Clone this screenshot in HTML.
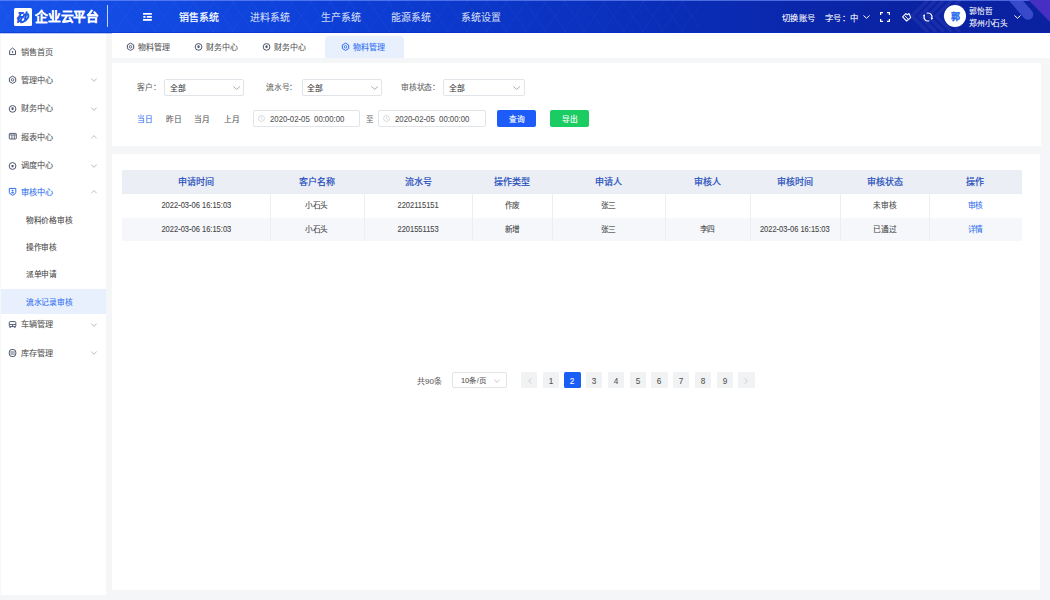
<!DOCTYPE html>
<html lang="zh-CN"><head><meta charset="utf-8"><style>
*{margin:0;padding:0;box-sizing:border-box}
html,body{width:1050px;height:600px;overflow:hidden;background:#f5f6f8;font-family:"Liberation Sans",sans-serif;color:#333}
.t{position:absolute;white-space:nowrap;line-height:1;transform-origin:0 0;-webkit-text-stroke:0.2px currentColor}
.b{position:absolute}
svg{position:absolute;overflow:visible}
#hdr{position:absolute;left:0;top:0;width:1050px;height:33px;background:linear-gradient(90deg,#1753ea 0%,#0d40d8 30%,#0a2fbb 60%,#0a23a3 85%,#0a21a0 100%);overflow:hidden}
</style></head><body>
<div id="hdr">
<div class="b" style="left:0;top:0;width:700px;height:32px;opacity:.025;background:repeating-linear-gradient(55deg,transparent 0 15px,#fff 15px 16px),repeating-linear-gradient(-55deg,transparent 0 15px,#fff 15px 16px)"></div>
<div class="b" style="left:0;top:0;width:1050px;height:1px;background:rgba(120,150,255,.6)"></div>
<svg style="left:990px;top:0" width="60" height="32" viewBox="0 0 60 32"><line x1="22" y1="-4" x2="38" y2="14.5" stroke="rgba(86,98,230,.62)" stroke-width="10.5" stroke-linecap="round"/><polygon points="38.5,0 60,0 60,22" fill="#4630c4"/></svg>
<svg style="left:900px;top:0" width="80" height="32" viewBox="0 0 80 32" opacity=".09"><path d="M28 0L12 16L28 32M36 0L20 16L36 32M44 0L28 16L44 32M52 0L36 16L52 32M60 0L44 16L60 32" fill="none" stroke="#b0a0ff" stroke-width="3.5"/></svg>
<div class="b" style="left:0;top:32px;width:1050px;height:1px;background:rgba(10,40,200,.45)"></div>
<div class="b" style="left:14px;top:8px;width:18px;height:17.8px;background:#fff;border-radius:1.5px"></div>
<div class="t" style="left:16.4px;top:11.7px;font-size:20px;transform:scale(0.6000,0.6000);color:#1a55e6;font-weight:bold;font-style:italic;-webkit-text-stroke:0.5px #1a55e6">砂</div>
<div class="t" style="left:35px;top:10.25px;font-size:20px;transform:scale(0.6400,0.6400);color:#fff;font-weight:bold">企业云平台</div>
<div class="b" style="left:107px;top:5px;width:1px;height:22.4px;background:rgba(255,255,255,.75)"></div>
<svg style="left:143.2px;top:13.1px" width="9" height="8" viewBox="0 0 9 8"><g fill="#fff"><rect x="0" y="0" width="8.8" height="1.7"/><rect x="0.3" y="3" width="2.2" height="1.8"/><rect x="3.8" y="3" width="5" height="1.8"/><rect x="0" y="6" width="8.8" height="1.8"/></g></svg>
<div class="t" style="left:179px;top:12.7px;font-size:20px;transform:scale(0.4950,0.4950);color:#fff;-webkit-text-stroke:0.45px #fff">销售系统</div>
<div class="t" style="left:249.6px;top:12.7px;font-size:20px;transform:scale(0.4950,0.4950);color:rgba(255,255,255,.78);">进料系统</div>
<div class="t" style="left:320.5px;top:12.7px;font-size:20px;transform:scale(0.4950,0.4950);color:rgba(255,255,255,.78);">生产系统</div>
<div class="t" style="left:391px;top:12.7px;font-size:20px;transform:scale(0.4950,0.4950);color:rgba(255,255,255,.78);">能源系统</div>
<div class="t" style="left:461px;top:12.7px;font-size:20px;transform:scale(0.4950,0.4950);color:rgba(255,255,255,.78);">系统设置</div>
<div class="t" style="left:782px;top:13.7px;font-size:20px;transform:scale(0.4150,0.4150);color:#fff;">切换账号</div>
<div class="t" style="left:825px;top:13.7px;font-size:20px;transform:scale(0.4150,0.4150);color:#fff;">字号：中</div>
<svg style="left:863px;top:15.3px" width="7" height="4" viewBox="0 0 7 4"><path d="M0.5 0.5L3.5 3.3L6.5 0.5" fill="none" stroke="#fff" stroke-width="1"/></svg>
<svg style="left:880px;top:12px" width="10" height="10" viewBox="0 0 10 10"><path d="M0.6 3V0.6H3M7 0.6H9.4V3M9.4 7V9.4H7M3 9.4H0.6V7" fill="none" stroke="#fff" stroke-width="1.2"/></svg>
<svg style="left:898px;top:9px" width="18" height="16" viewBox="0 0 18 16"><path d="M4.6 7.8L7.8 4.6L9.3 5.8L11.0 4.5L12.7 8.6L8.6 12.0Z" fill="none" stroke="#fff" stroke-width="1.1" stroke-linejoin="round"/><path d="M7.0 6.9L10.4 10.2" stroke="#fff" stroke-width="1"/></svg>
<svg style="left:923px;top:12px" width="10" height="10" viewBox="0 0 10 10"><path d="M3.63 1.24A4 4 0 0 1 8.46 7.0M6.37 8.76A4 4 0 0 1 1.54 3.0" fill="none" stroke="#fff" stroke-width="1.1"/><path d="M8.06 7.69L10.19 6.61L7.93 5.31ZM1.94 2.31L2.07 4.69L-0.19 3.39Z" fill="#fff"/></svg>
<div class="b" style="left:944px;top:5px;width:22px;height:22px;border-radius:50%;background:#fff"></div>
<div class="t" style="left:951.1px;top:12.1px;font-size:20px;transform:scale(0.4500,0.4500);color:#2f6ff0;font-weight:bold">郭</div>
<div class="t" style="left:969.4px;top:7.1px;font-size:20px;transform:scale(0.3875,0.3875);color:#fff;">郭怡哲</div>
<div class="t" style="left:969.4px;top:19.0px;font-size:20px;transform:scale(0.3875,0.3875);color:#fff;">郑州小石头</div>
<svg style="left:1014px;top:15px" width="7" height="4" viewBox="0 0 7 4"><path d="M0.5 0.5L3.5 3.3L6.5 0.5" fill="none" stroke="#fff" stroke-width="1"/></svg>
</div>
<div class="b" style="left:0;top:33px;width:106px;height:561.6px;background:#fff"></div>
<div class="b" style="left:0;top:288.7px;width:106px;height:25.3px;background:#e8f0fe"></div>
<svg style="left:8px;top:46.8px" width="10" height="10" viewBox="0 0 10 10"><path d="M4.55 1.0L7.5 3.55V7.55H1.6V3.55Z" fill="none" stroke="#4e5670" stroke-width="1" stroke-linejoin="round"/><path d="M4.55 3.7L5.45 5.05L4.55 6.35L3.65 5.05Z" fill="#4e5670"/></svg><div class="t" style="left:20.9px;top:47.49999999999999px;font-size:20px;transform:scale(0.4075,0.4075);color:#555;">销售首页</div>

<svg style="left:8px;top:75px" width="10" height="10" viewBox="0 0 10 10"><path d="M4.55 1.15L7.7 2.95V6.6L4.55 8.4L1.4 6.6V2.95Z" fill="none" stroke="#4e5670" stroke-width="1" stroke-linejoin="round"/><circle cx="4.55" cy="4.8" r="1.25" fill="none" stroke="#4e5670" stroke-width="0.9"/></svg><div class="t" style="left:20.9px;top:75.7px;font-size:20px;transform:scale(0.4075,0.4075);color:#555;">管理中心</div>
<svg style="left:90.5px;top:78.2px" width="6" height="4" viewBox="0 0 6 4"><path d="M0.4 0.5L3.0 3.4L5.6 0.5" fill="none" stroke="#aab" stroke-width="0.8"/></svg>
<svg style="left:8px;top:103.7px" width="10" height="10" viewBox="0 0 10 10"><circle cx="4.55" cy="4.9" r="3.35" fill="none" stroke="#4e5670" stroke-width="1"/><ellipse cx="4.55" cy="4.8" rx="1.15" ry="1.45" fill="#4e5670"/></svg><div class="t" style="left:20.9px;top:104.4px;font-size:20px;transform:scale(0.4075,0.4075);color:#555;">财务中心</div>
<svg style="left:90.5px;top:106.9px" width="6" height="4" viewBox="0 0 6 4"><path d="M0.4 0.5L3.0 3.4L5.6 0.5" fill="none" stroke="#aab" stroke-width="0.8"/></svg>
<svg style="left:8px;top:132.3px" width="10" height="10" viewBox="0 0 10 10"><rect x="1.3" y="1.4" width="7" height="5.6" rx="0.7" fill="none" stroke="#4e5670" stroke-width="0.95"/><path d="M1.3 2.9H8.3M3.9 3V7M6.3 3V7" fill="none" stroke="#4e5670" stroke-width="0.85"/></svg><div class="t" style="left:20.9px;top:133.00000000000003px;font-size:20px;transform:scale(0.4075,0.4075);color:#555;">报表中心</div>
<svg style="left:90.5px;top:135.10000000000002px" width="6" height="4" viewBox="0 0 6 4"><path d="M0.4 3.2L3 0.6L5.6 3.2" fill="none" stroke="#aab" stroke-width="0.8"/></svg>
<svg style="left:8px;top:160.6px" width="10" height="10" viewBox="0 0 10 10"><circle cx="4.55" cy="5" r="3.4" fill="none" stroke="#4e5670" stroke-width="1"/><path d="M3.5 3.9H5.6V5.2Q5.6 6 4.55 6.6Q3.5 6 3.5 5.2Z" fill="#4e5670"/></svg><div class="t" style="left:20.9px;top:161.3px;font-size:20px;transform:scale(0.4075,0.4075);color:#555;">调度中心</div>
<svg style="left:90.5px;top:163.79999999999998px" width="6" height="4" viewBox="0 0 6 4"><path d="M0.4 0.5L3.0 3.4L5.6 0.5" fill="none" stroke="#aab" stroke-width="0.8"/></svg>
<svg style="left:8px;top:187.4px" width="10" height="10" viewBox="0 0 10 10"><path d="M1.3 1.4H7.8V5.3Q7.8 6.9 4.55 8.3Q1.3 6.9 1.3 5.3Z" fill="none" stroke="#2f6ff0" stroke-width="1" stroke-linejoin="round"/><circle cx="4.55" cy="3.7" r="0.9" fill="#2f6ff0"/><ellipse cx="4.55" cy="5.75" rx="1.5" ry="0.75" fill="#2f6ff0"/></svg><div class="t" style="left:20.9px;top:188.10000000000002px;font-size:20px;transform:scale(0.4075,0.4075);color:#2f6ff0;">审核中心</div>
<svg style="left:90.5px;top:190.20000000000002px" width="6" height="4" viewBox="0 0 6 4"><path d="M0.4 3.2L3 0.6L5.6 3.2" fill="none" stroke="#aab" stroke-width="0.8"/></svg>
<div class="t" style="left:26px;top:216.1px;font-size:20px;transform:scale(0.3850,0.3850);color:#444;">物料价格审核</div>
<div class="t" style="left:26px;top:243.1px;font-size:20px;transform:scale(0.3850,0.3850);color:#444;">操作审核</div>
<div class="t" style="left:26px;top:270.40000000000003px;font-size:20px;transform:scale(0.3850,0.3850);color:#444;">派单申请</div>
<div class="t" style="left:26px;top:297.8px;font-size:20px;transform:scale(0.3850,0.3850);color:#2f6ff0;">流水记录审核</div>
<svg style="left:8px;top:319.7px" width="10" height="10" viewBox="0 0 10 10"><rect x="1.3" y="1.6" width="6.5" height="5" rx="0.9" fill="none" stroke="#4e5670" stroke-width="1"/><path d="M1.3 4.5H7.8" stroke="#4e5670" stroke-width="0.9"/><circle cx="4.55" cy="5.6" r="0.65" fill="#4e5670"/><rect x="1.5" y="6.4" width="1.3" height="1.4" fill="#4e5670"/><rect x="6.3" y="6.4" width="1.3" height="1.4" fill="#4e5670"/></svg><div class="t" style="left:20.9px;top:320.4px;font-size:20px;transform:scale(0.4075,0.4075);color:#555;">车辆管理</div>
<svg style="left:90.5px;top:322.9px" width="6" height="4" viewBox="0 0 6 4"><path d="M0.4 0.5L3.0 3.4L5.6 0.5" fill="none" stroke="#aab" stroke-width="0.8"/></svg>
<svg style="left:8px;top:348px" width="10" height="10" viewBox="0 0 10 10"><rect x="1.3" y="1.5" width="6.5" height="7" rx="2.6" fill="none" stroke="#4e5670" stroke-width="1"/><path d="M2.3 4H6.8M2.3 6H6.8" stroke="#4e5670" stroke-width="0.9"/></svg><div class="t" style="left:20.9px;top:348.7px;font-size:20px;transform:scale(0.4075,0.4075);color:#555;">库存管理</div>
<svg style="left:90.5px;top:351.2px" width="6" height="4" viewBox="0 0 6 4"><path d="M0.4 0.5L3.0 3.4L5.6 0.5" fill="none" stroke="#aab" stroke-width="0.8"/></svg>
<div class="b" style="left:112px;top:33px;width:938px;height:24.6px;background:#fff"></div>
<div class="b" style="left:324.6px;top:36px;width:79.8px;height:21.6px;background:#e8f0fe;border-radius:4px 4px 0 0"></div>
<svg style="left:125.5px;top:42px" width="10" height="10" viewBox="0 0 10 10"><path d="M4.55 1.15L7.7 2.95V6.6L4.55 8.4L1.4 6.6V2.95Z" fill="none" stroke="#4e5670" stroke-width="1" stroke-linejoin="round"/><circle cx="4.55" cy="4.8" r="1.25" fill="none" stroke="#4e5670" stroke-width="0.9"/></svg><div class="t" style="left:138px;top:42.8px;font-size:20px;transform:scale(0.4000,0.4000);color:#555;">物料管理</div>
<svg style="left:194.0px;top:42px" width="10" height="10" viewBox="0 0 10 10"><circle cx="4.55" cy="4.9" r="3.35" fill="none" stroke="#4e5670" stroke-width="1"/><ellipse cx="4.55" cy="4.8" rx="1.15" ry="1.45" fill="#4e5670"/></svg><div class="t" style="left:206px;top:42.8px;font-size:20px;transform:scale(0.4000,0.4000);color:#555;">财务中心</div>
<svg style="left:262.0px;top:42px" width="10" height="10" viewBox="0 0 10 10"><circle cx="4.55" cy="4.9" r="3.35" fill="none" stroke="#4e5670" stroke-width="1"/><ellipse cx="4.55" cy="4.8" rx="1.15" ry="1.45" fill="#4e5670"/></svg><div class="t" style="left:273.6px;top:42.8px;font-size:20px;transform:scale(0.4000,0.4000);color:#555;">财务中心</div>
<svg style="left:341.0px;top:42px" width="10" height="10" viewBox="0 0 10 10"><path d="M4.55 1.15L7.7 2.95V6.6L4.55 8.4L1.4 6.6V2.95Z" fill="none" stroke="#2f6ff0" stroke-width="1" stroke-linejoin="round"/><circle cx="4.55" cy="4.8" r="1.25" fill="none" stroke="#2f6ff0" stroke-width="0.9"/></svg><div class="t" style="left:352.5px;top:42.8px;font-size:20px;transform:scale(0.4000,0.4000);color:#2f6ff0;">物料管理</div>
<div class="b" style="left:112px;top:62.5px;width:929px;height:83.5px;background:#fff"></div>
<div class="t" style="left:137px;top:83.4px;font-size:20px;transform:scale(0.3900,0.3900);color:#666;">客户：</div>
<div class="b" style="left:164.3px;top:79.3px;width:80.19999999999999px;height:16.3px;border:1px solid #e1e4e9;border-radius:2px;background:#fff"></div><div class="t" style="left:169.8px;top:83.60000000000001px;font-size:20px;transform:scale(0.3900,0.3900);color:#333;">全部</div>
<svg style="left:233.2px;top:86px" width="7.4" height="4" viewBox="0 0 7.4 4"><path d="M0.4 0.5L3.7 3.4L7.0 0.5" fill="none" stroke="#999" stroke-width="0.8"/></svg>
<div class="t" style="left:266.4px;top:83.4px;font-size:20px;transform:scale(0.3900,0.3900);color:#666;">流水号：</div>
<div class="b" style="left:301.5px;top:79.3px;width:80.80000000000001px;height:16.3px;border:1px solid #e1e4e9;border-radius:2px;background:#fff"></div><div class="t" style="left:307.0px;top:83.60000000000001px;font-size:20px;transform:scale(0.3900,0.3900);color:#333;">全部</div>
<svg style="left:371.0px;top:86px" width="7.4" height="4" viewBox="0 0 7.4 4"><path d="M0.4 0.5L3.7 3.4L7.0 0.5" fill="none" stroke="#999" stroke-width="0.8"/></svg>
<div class="t" style="left:401px;top:83.4px;font-size:20px;transform:scale(0.3900,0.3900);color:#666;">审核状态：</div>
<div class="b" style="left:443.3px;top:79.3px;width:81.30000000000001px;height:16.3px;border:1px solid #e1e4e9;border-radius:2px;background:#fff"></div><div class="t" style="left:448.8px;top:83.60000000000001px;font-size:20px;transform:scale(0.3900,0.3900);color:#333;">全部</div>
<svg style="left:513.3000000000001px;top:86px" width="7.4" height="4" viewBox="0 0 7.4 4"><path d="M0.4 0.5L3.7 3.4L7.0 0.5" fill="none" stroke="#999" stroke-width="0.8"/></svg>
<div class="t" style="left:137px;top:115.4px;font-size:20px;transform:scale(0.3850,0.3850);color:#2f6ff0;">当日</div>
<div class="t" style="left:166px;top:115.4px;font-size:20px;transform:scale(0.3850,0.3850);color:#555;">昨日</div>
<div class="t" style="left:194.4px;top:115.4px;font-size:20px;transform:scale(0.3850,0.3850);color:#555;">当月</div>
<div class="t" style="left:223.5px;top:115.4px;font-size:20px;transform:scale(0.3850,0.3850);color:#555;">上月</div>
<div class="b" style="left:252.9px;top:110.3px;width:107.4px;height:16.4px;border:1px solid #e1e4e9;border-radius:2px;background:#fff"></div><svg style="left:257.9px;top:115.2px" width="7" height="7" viewBox="0 0 7 7"><circle cx="3.5" cy="3.5" r="3" fill="none" stroke="#c8ccd4" stroke-width="0.7"/><path d="M3.5 1.7V3.6L4.8 4.4" fill="none" stroke="#c8ccd4" stroke-width="0.7"/></svg><div class="t" style="left:270.0px;top:114.9px;font-size:20px;transform:scale(0.3885,0.4200);color:#555;white-space:pre">2020-02-05  00:00:00</div>

<div class="t" style="left:366px;top:116.30000000000001px;font-size:20px;transform:scale(0.3800,0.3800);color:#666;">至</div>
<div class="b" style="left:377.9px;top:110.3px;width:107.90000000000003px;height:16.4px;border:1px solid #e1e4e9;border-radius:2px;background:#fff"></div><svg style="left:382.9px;top:115.2px" width="7" height="7" viewBox="0 0 7 7"><circle cx="3.5" cy="3.5" r="3" fill="none" stroke="#c8ccd4" stroke-width="0.7"/><path d="M3.5 1.7V3.6L4.8 4.4" fill="none" stroke="#c8ccd4" stroke-width="0.7"/></svg><div class="t" style="left:395.0px;top:114.9px;font-size:20px;transform:scale(0.3885,0.4200);color:#555;white-space:pre">2020-02-05  00:00:00</div>

<div class="b" style="left:496.8px;top:110px;width:39px;height:17.3px;background:#1d5cf8;border-radius:2px"></div><div class="t" style="left:509.3px;top:115.4px;font-size:20px;transform:scale(0.3850,0.3850);color:#fff;-webkit-text-stroke:0.4px #fff">查询</div>
<div class="b" style="left:549.6px;top:110px;width:39.4px;height:17.3px;background:#1bcc63;border-radius:2px"></div><div class="t" style="left:562.4px;top:115.4px;font-size:20px;transform:scale(0.3850,0.3850);color:#fff;-webkit-text-stroke:0.4px #fff">导出</div>
<div class="b" style="left:112px;top:154px;width:928px;height:435.5px;background:#fff"></div>
<div class="b" style="left:121.5px;top:170px;width:900.3px;height:24px;background:#ebeef5"></div>
<div class="b" style="left:121.5px;top:217.7px;width:900.3px;height:23.5px;background:#f5f7fb"></div>
<div class="b" style="left:270.2px;top:170px;width:0.6px;height:71.2px;background:#eceef4"></div>
<div class="b" style="left:363.5px;top:170px;width:0.6px;height:71.2px;background:#eceef4"></div>
<div class="b" style="left:471.7px;top:170px;width:0.6px;height:71.2px;background:#eceef4"></div>
<div class="b" style="left:552.3px;top:170px;width:0.6px;height:71.2px;background:#eceef4"></div>
<div class="b" style="left:665px;top:170px;width:0.6px;height:71.2px;background:#eceef4"></div>
<div class="b" style="left:750px;top:170px;width:0.6px;height:71.2px;background:#eceef4"></div>
<div class="b" style="left:839.6px;top:170px;width:0.6px;height:71.2px;background:#eceef4"></div>
<div class="b" style="left:929.2px;top:170px;width:0.6px;height:71.2px;background:#eceef4"></div>
<div class="t" style="left:121.5px;top:177.3px;font-size:20px;transform:scale(0.4500,0.4500);width:330.44px;text-align:center;color:#1f4cba;-webkit-text-stroke:0.45px #1f4cba">申请时间</div>
<div class="t" style="left:121.5px;top:201.10000000000002px;font-size:20px;transform:scale(0.3759,0.4200);width:395.58px;text-align:center;color:#444;">2022-03-06 16:15:03</div>
<div class="t" style="left:121.5px;top:224.9px;font-size:20px;transform:scale(0.3759,0.4200);width:395.58px;text-align:center;color:#444;">2022-03-06 16:15:03</div>
<div class="t" style="left:270.2px;top:177.3px;font-size:20px;transform:scale(0.4500,0.4500);width:207.33px;text-align:center;color:#1f4cba;-webkit-text-stroke:0.45px #1f4cba">客户名称</div>
<div class="t" style="left:270.2px;top:201.10000000000002px;font-size:20px;transform:scale(0.3850,0.3850);width:242.34px;text-align:center;color:#444;">小石头</div>
<div class="t" style="left:270.2px;top:224.9px;font-size:20px;transform:scale(0.3850,0.3850);width:242.34px;text-align:center;color:#444;">小石头</div>
<div class="t" style="left:363.5px;top:177.3px;font-size:20px;transform:scale(0.4500,0.4500);width:240.44px;text-align:center;color:#1f4cba;-webkit-text-stroke:0.45px #1f4cba">流水号</div>
<div class="t" style="left:363.5px;top:201.10000000000002px;font-size:20px;transform:scale(0.3759,0.4200);width:287.84px;text-align:center;color:#444;">2202115151</div>
<div class="t" style="left:363.5px;top:224.9px;font-size:20px;transform:scale(0.3759,0.4200);width:287.84px;text-align:center;color:#444;">2201551153</div>
<div class="t" style="left:471.7px;top:177.3px;font-size:20px;transform:scale(0.4500,0.4500);width:179.11px;text-align:center;color:#1f4cba;-webkit-text-stroke:0.45px #1f4cba">操作类型</div>
<div class="t" style="left:471.7px;top:201.10000000000002px;font-size:20px;transform:scale(0.3850,0.3850);width:209.35px;text-align:center;color:#444;">作废</div>
<div class="t" style="left:471.7px;top:224.9px;font-size:20px;transform:scale(0.3850,0.3850);width:209.35px;text-align:center;color:#444;">新增</div>
<div class="t" style="left:552.3px;top:177.3px;font-size:20px;transform:scale(0.4500,0.4500);width:250.44px;text-align:center;color:#1f4cba;-webkit-text-stroke:0.45px #1f4cba">申请人</div>
<div class="t" style="left:552.3px;top:201.10000000000002px;font-size:20px;transform:scale(0.3850,0.3850);width:292.73px;text-align:center;color:#444;">张三</div>
<div class="t" style="left:552.3px;top:224.9px;font-size:20px;transform:scale(0.3850,0.3850);width:292.73px;text-align:center;color:#444;">张三</div>
<div class="t" style="left:665px;top:177.3px;font-size:20px;transform:scale(0.4500,0.4500);width:188.89px;text-align:center;color:#1f4cba;-webkit-text-stroke:0.45px #1f4cba">审核人</div>
<div class="t" style="left:665px;top:224.9px;font-size:20px;transform:scale(0.3850,0.3850);width:220.78px;text-align:center;color:#444;">李四</div>
<div class="t" style="left:750px;top:177.3px;font-size:20px;transform:scale(0.4500,0.4500);width:199.11px;text-align:center;color:#1f4cba;-webkit-text-stroke:0.45px #1f4cba">审核时间</div>
<div class="t" style="left:750px;top:224.9px;font-size:20px;transform:scale(0.3759,0.4200);width:238.36px;text-align:center;color:#444;">2022-03-06 16:15:03</div>
<div class="t" style="left:839.6px;top:177.3px;font-size:20px;transform:scale(0.4500,0.4500);width:199.11px;text-align:center;color:#1f4cba;-webkit-text-stroke:0.45px #1f4cba">审核状态</div>
<div class="t" style="left:839.6px;top:201.10000000000002px;font-size:20px;transform:scale(0.3850,0.3850);width:232.73px;text-align:center;color:#444;">未审核</div>
<div class="t" style="left:839.6px;top:224.9px;font-size:20px;transform:scale(0.3850,0.3850);width:232.73px;text-align:center;color:#444;">已通过</div>
<div class="t" style="left:929.2px;top:177.3px;font-size:20px;transform:scale(0.4500,0.4500);width:205.78px;text-align:center;color:#1f4cba;-webkit-text-stroke:0.45px #1f4cba">操作</div>
<div class="t" style="left:929.2px;top:201.10000000000002px;font-size:20px;transform:scale(0.3850,0.3850);width:240.52px;text-align:center;color:#2f6ff0;">审核</div>
<div class="t" style="left:929.2px;top:224.9px;font-size:20px;transform:scale(0.3850,0.3850);width:240.52px;text-align:center;color:#2f6ff0;">详情</div>
<div class="t" style="left:417px;top:377px;font-size:20px;transform:scale(0.4000,0.4000);color:#666;">共90条</div>
<div class="b" style="left:451.8px;top:372.2px;width:55px;height:16px;border:1px solid #e2e4e9;border-radius:2px;background:#fff"></div><div class="t" style="left:460.5px;top:377.4px;font-size:20px;transform:scale(0.3700,0.3700);color:#555;">10条/页</div>
<svg style="left:494px;top:379.2px" width="6" height="4" viewBox="0 0 6 4"><path d="M0.4 0.5L3.0 3.4L5.6 0.5" fill="none" stroke="#bbb" stroke-width="0.8"/></svg>
<div class="b" style="left:520.8px;top:372px;width:16.3px;height:16px;background:#f1f2f4;border-radius:1.5px"></div><svg style="left:527.5px;top:377.5px" width="4" height="6" viewBox="0 0 4 6"><path d="M3.2 0.4L0.8 3L3.2 5.6" fill="none" stroke="#bbb" stroke-width="0.7"/></svg>
<div class="b" style="left:542.55px;top:372px;width:16.3px;height:16px;background:#f1f2f4;border-radius:1.5px"></div><div class="t" style="left:542.55px;top:376.6px;font-size:20px;transform:scale(0.4100,0.4100);width:39.76px;text-align:center;color:#555;">1</div>
<div class="b" style="left:564.3px;top:372px;width:16.3px;height:16px;background:#1b5ef6;border-radius:1.5px"></div><div class="t" style="left:564.3px;top:376.6px;font-size:20px;transform:scale(0.4100,0.4100);width:39.76px;text-align:center;color:#fff;">2</div>
<div class="b" style="left:586.05px;top:372px;width:16.3px;height:16px;background:#f1f2f4;border-radius:1.5px"></div><div class="t" style="left:586.05px;top:376.6px;font-size:20px;transform:scale(0.4100,0.4100);width:39.76px;text-align:center;color:#555;">3</div>
<div class="b" style="left:607.8px;top:372px;width:16.3px;height:16px;background:#f1f2f4;border-radius:1.5px"></div><div class="t" style="left:607.8px;top:376.6px;font-size:20px;transform:scale(0.4100,0.4100);width:39.76px;text-align:center;color:#555;">4</div>
<div class="b" style="left:629.55px;top:372px;width:16.3px;height:16px;background:#f1f2f4;border-radius:1.5px"></div><div class="t" style="left:629.55px;top:376.6px;font-size:20px;transform:scale(0.4100,0.4100);width:39.76px;text-align:center;color:#555;">5</div>
<div class="b" style="left:651.3px;top:372px;width:16.3px;height:16px;background:#f1f2f4;border-radius:1.5px"></div><div class="t" style="left:651.3px;top:376.6px;font-size:20px;transform:scale(0.4100,0.4100);width:39.76px;text-align:center;color:#555;">6</div>
<div class="b" style="left:673.05px;top:372px;width:16.3px;height:16px;background:#f1f2f4;border-radius:1.5px"></div><div class="t" style="left:673.05px;top:376.6px;font-size:20px;transform:scale(0.4100,0.4100);width:39.76px;text-align:center;color:#555;">7</div>
<div class="b" style="left:694.8px;top:372px;width:16.3px;height:16px;background:#f1f2f4;border-radius:1.5px"></div><div class="t" style="left:694.8px;top:376.6px;font-size:20px;transform:scale(0.4100,0.4100);width:39.76px;text-align:center;color:#555;">8</div>
<div class="b" style="left:716.55px;top:372px;width:16.3px;height:16px;background:#f1f2f4;border-radius:1.5px"></div><div class="t" style="left:716.55px;top:376.6px;font-size:20px;transform:scale(0.4100,0.4100);width:39.76px;text-align:center;color:#555;">9</div>
<div class="b" style="left:738.3px;top:372px;width:16.3px;height:16px;background:#f1f2f4;border-radius:1.5px"></div><svg style="left:744.3px;top:377.5px" width="4" height="6" viewBox="0 0 4 6"><path d="M0.8 0.4L3.2 3L0.8 5.6" fill="none" stroke="#bbb" stroke-width="0.7"/></svg>
<div class="b" style="left:0;top:34px;width:1px;height:560px;background:#f6f7f9"></div>
<div class="b" style="left:0;top:33px;width:112px;height:0.7px;background:rgba(60,100,230,.35)"></div>
</body></html>
